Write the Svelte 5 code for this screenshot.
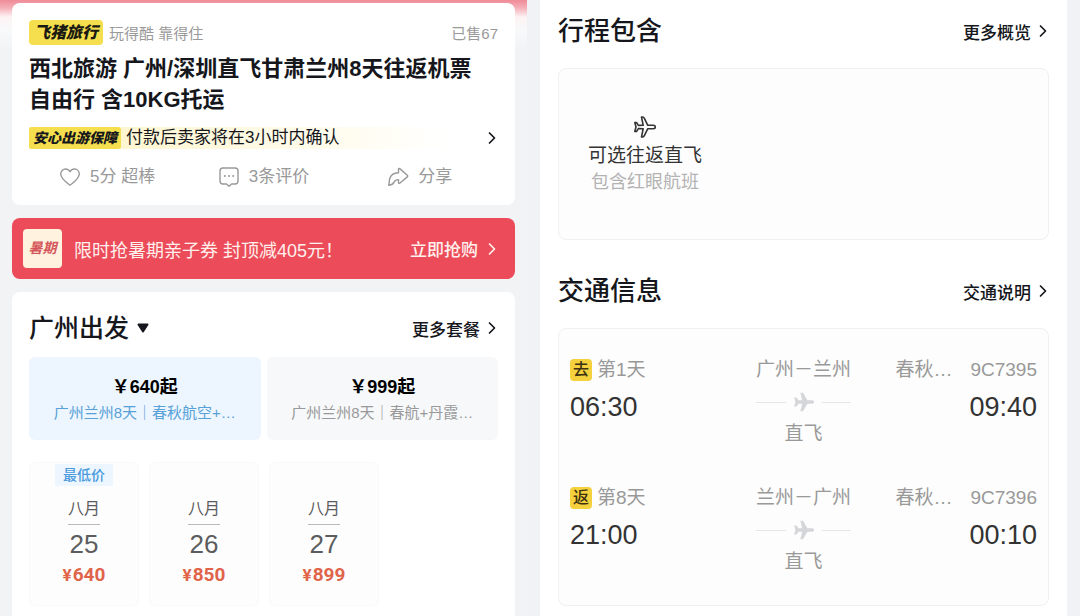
<script>
	let selectedPackage = $state(0);
	let liked = $state(false);

	const packages = [
		{ price: 640, name: '广州兰州8天｜春秋航空+…' },
		{ price: 999, name: '广州兰州8天｜春航+丹霞…' },
	];

	const dates = [
		{ month: '八月', day: 25, price: 640, lowest: true },
		{ month: '八月', day: 26, price: 850 },
		{ month: '八月', day: 27, price: 899 },
	];

	const flights = [
		{ tag: '去', day: '第1天', depart: '06:30', route: '广州－兰州', airline: '春秋…', code: '9C7395', arrive: '09:40' },
		{ tag: '返', day: '第8天', depart: '21:00', route: '兰州－广州', airline: '春秋…', code: '9C7396', arrive: '00:10' },
	];
</script>

{#snippet chevron()}
	<svg class="chevron" viewBox="0 0 8 14" aria-hidden="true"><path d="M1.500 2 6.500 7l-5 5" /></svg>
{/snippet}

<div class="page">
	<main class="product">
		<section class="card summary">
			<div class="brand-row">
				<span class="brand">飞猪旅行</span>
				<span class="slogan">玩得酷 靠得住</span>
				<span class="sold">已售67</span>
			</div>
			<h1>西北旅游 广州/深圳直飞甘肃兰州8天往返机票自由行 含10KG托运</h1>
			<a href="#guarantee" class="guarantee">
				<span class="guarantee-tag">安心出游保障</span>
				<span class="guarantee-text">付款后卖家将在3小时内确认</span>
				{@render chevron()}
			</a>
			<div class="actions">
				<button class:liked onclick={() => (liked = !liked)}>
					<svg viewBox="0 0 22 22" aria-hidden="true">
						<path d="M11 19.200C8 17 1.700 12.800 1.700 8.100 1.700 5 3.900 3 6.500 3 8.400 3 10 4 11 5.700 12 4 13.600 3 15.500 3c2.600 0 4.800 2 4.800 5.100 0 4.700-6.300 8.900-9.300 11.100z" />
					</svg>
					5分 超棒
				</button>
				<button>
					<svg viewBox="0 0 22 22" aria-hidden="true">
						<path d="M5 2h12a3 3 0 0 1 3 3v10a3 3 0 0 1-3 3h-3.500L11 20.200 8.500 18H5a3 3 0 0 1-3-3V5a3 3 0 0 1 3-3z" />
						<path class="dots" d="M6.800 10h.01M11 10h.01M15.200 10h.01" />
					</svg>
					3条评价
				</button>
				<button>
					<svg viewBox="0 0 22 22" aria-hidden="true">
						<path d="M11.500 3.200c0-.7.700-1 1.200-.6l7.600 6.700c.5.500.5 1.100 0 1.600l-7.600 6.300c-.5.400-1.200.1-1.200-.6v-3c-2.500 0-3.700.8-4.600 2.800-.7 1.500-1.700 2.400-4.700 2.800-.6.1-.8-.4-.5-.8 1-1.500.3-3 .9-5.400C3.600 9.400 6.700 7 11.500 6.800z" />
					</svg>
					分享
				</button>
			</div>
		</section>

		<a href="#coupon" class="coupon">
			<span class="coupon-icon">暑期</span>
			<span class="coupon-text">限时抢暑期亲子券 封顶减405元！</span>
			<span class="coupon-go">立即抢购</span>
			{@render chevron()}
		</a>

		<section class="card booking">
			<header>
				<button class="departure">
					广州出发
					<svg viewBox="0 0 12 10" aria-hidden="true"><path d="M1.500 1.500h9L6 8.500z" /></svg>
				</button>
				<a href="#packages" class="more">更多套餐 {@render chevron()}</a>
			</header>
			<div class="packages">
				{#each packages as item, i}
					<button class="package" class:active={selectedPackage === i} onclick={() => (selectedPackage = i)}>
						<strong>￥{item.price}起</strong>
						<span>{item.name}</span>
					</button>
				{/each}
			</div>
			<div class="dates">
				{#each dates as date}
					<button class="date">
						{#if date.lowest}
							<span class="lowest">最低价</span>
						{/if}
						<span class="month">{date.month}</span>
						<span class="day">{date.day}</span>
						<span class="price"><span class="yen">¥</span>{date.price}</span>
					</button>
				{/each}
			</div>
		</section>
	</main>

	<aside class="details">
		<section>
			<header>
				<h2>行程包含</h2>
				<a href="#overview" class="more">更多概览 {@render chevron()}</a>
			</header>
			<div class="panel included">
				<div class="feature">
					<svg viewBox="0 0 24 24" aria-hidden="true">
						<path d="M22.300 12c0-1-.9-1.700-2.100-1.700h-5.400L11.500 3.600C11 2.600 10.500 2 9.700 2H8.500l1.700 8.300-4.800.1L3.500 7.500H1.800L3 12l-1.200 4.500h1.700l1.900-2.900 4.800.1L8.500 22h1.200c.8 0 1.300-.6 1.800-1.600l3.300-6.700h5.400c1.200 0 2.100-.7 2.100-1.700z" />
					</svg>
					<span class="feature-name">可选往返直飞</span>
					<span class="feature-note">包含红眼航班</span>
				</div>
			</div>
		</section>

		<section>
			<header>
				<h2>交通信息</h2>
				<a href="#transport" class="more">交通说明 {@render chevron()}</a>
			</header>
			<div class="panel flights">
				{#each flights as flight}
					<article class="flight">
						<div>
							<div class="label"><span class="tag">{flight.tag}</span>{flight.day}</div>
							<time>{flight.depart}</time>
						</div>
						<div class="route">
							<div class="label">{flight.route}</div>
							<div class="track">
								<svg viewBox="0 0 24 24" aria-hidden="true">
									<path d="M23 12c0-1.200-1-2-2.300-2h-5L10.900 1.800H8l2 8.200H6L3.800 7H1.300l1.400 5-1.400 5h2.500L6 14h4l-2 8.200h2.900l4.800-8.200h5c1.300 0 2.300-.8 2.300-2z" />
								</svg>
							</div>
							<div class="label">直飞</div>
						</div>
						<div class="arrival">
							<div class="label"><span>{flight.airline}</span><span>{flight.code}</span></div>
							<time>{flight.arrive}</time>
						</div>
					</article>
				{/each}
			</div>
		</section>
	</aside>
</div>

<style>
	:global(body) {
		margin: 0;
		background: #f0f2f5;
	}

	.page {
		display: grid;
		grid-template-columns: 1fr 1fr;
		min-height: 100vh;
		font-family: 'Liberation Sans', 'Noto Sans CJK SC', sans-serif;
		color: #15171c;
	}

	.page :global(*) {
		box-sizing: border-box;
	}

	button {
		padding: 0;
		border: 0;
		background: none;
		font: inherit;
		color: inherit;
		cursor: pointer;
	}

	a {
		color: inherit;
		text-decoration: none;
	}

	h1,
	h2 {
		margin: 0;
		font-weight: 500;
	}

	svg {
		flex-shrink: 0;
		fill: none;
		stroke: currentColor;
		stroke-linecap: round;
		stroke-linejoin: round;
	}

	header {
		display: flex;
		align-items: center;
		justify-content: space-between;
	}

	.chevron {
		width: 8px;
		height: 14px;
		stroke-width: 1.7;
	}

	.product {
		display: flex;
		flex-direction: column;
		gap: 13px;
		min-width: 0;
		margin-right: 13px;
		padding: 3px 12px 0;
		background: linear-gradient(#ef8b98, #f5b0b8 8px, #fdf3f4 17px, #f8f9fa 30px, #f2f3f5 50px);
	}

	.card {
		padding: 17px 17px 16px;
		border-radius: 8px;
		background: #fff;
	}

	.brand-row {
		display: flex;
		align-items: center;
		gap: 6px;
		height: 25px;
		font-size: 15px;
		color: #999;
	}

	.brand {
		padding: 0 5px;
		border-radius: 4px;
		background: #f5df4e;
		font-size: 16px;
		font-style: italic;
		font-weight: 900;
		line-height: 25px;
		color: #1b1a12;
	}

	.sold {
		margin-left: auto;
	}

	h1 {
		margin-top: 8px;
		padding-right: 12px;
		font-size: 22px;
		font-weight: 700;
		line-height: 31px;
	}

	.guarantee {
		display: flex;
		align-items: center;
		gap: 5px;
		height: 22px;
		margin-top: 12px;
		padding-right: 2px;
		background: linear-gradient(90deg, #fdf3c4, #fffbe8 55%, #fff 90%);
		font-size: 17px;
		line-height: 22px;
	}

	.guarantee-tag {
		padding: 0 4px;
		border-radius: 3px;
		background: #f5df4e;
		font-size: 14px;
		font-style: italic;
		font-weight: 900;
	}

	.guarantee .chevron {
		margin-left: auto;
	}

	.actions {
		display: grid;
		grid-template-columns: repeat(3, 1fr);
		margin-top: 16px;
		font-size: 17px;
		line-height: 24px;
		color: #999;
	}

	.actions button {
		display: flex;
		align-items: center;
		justify-content: center;
		gap: 9px;
	}

	.actions svg {
		width: 22px;
		height: 22px;
		stroke-width: 1.4;
	}

	.actions .dots {
		stroke-width: 2;
	}

	.actions .liked {
		color: #ec4c59;
	}

	.coupon {
		display: flex;
		align-items: center;
		height: 61px;
		padding: 0 19px 0 11px;
		border-radius: 8px;
		background: #ec4c59;
		font-size: 18px;
		color: #fff0ee;
	}

	.coupon-icon {
		width: 39px;
		margin-right: 12px;
		border-radius: 4px;
		background: #fff2df;
		font-size: 14px;
		font-style: italic;
		font-weight: 700;
		line-height: 39px;
		text-align: center;
		color: #d4575b;
	}

	.coupon-go {
		margin-left: auto;
		margin-right: 10px;
		font-size: 17px;
		font-weight: 500;
	}

	.booking {
		flex: 1;
		padding: 20px 17px 10px;
		border-radius: 8px 8px 0 0;
	}

	.departure {
		display: flex;
		align-items: center;
		gap: 8px;
		font-size: 25px;
		font-weight: 500;
		line-height: 32px;
	}

	.departure svg {
		width: 12px;
		height: 10px;
		fill: currentColor;
		stroke-width: 2;
	}

	.more {
		display: flex;
		align-items: center;
		gap: 8px;
		padding-right: 2px;
		font-size: 17px;
		font-weight: 500;
	}

	.packages {
		display: grid;
		grid-template-columns: 1fr 1fr;
		gap: 6px;
		margin-top: 13px;
	}

	.package {
		display: flex;
		flex-direction: column;
		align-items: center;
		justify-content: center;
		height: 83px;
		padding-top: 2px;
		border-radius: 6px;
		background: #f6f8fa;
		font-size: 15px;
		line-height: 26px;
		color: #999;
	}

	.package strong {
		font-size: 18px;
		color: #000;
	}

	.package.active {
		background: #edf6fe;
		color: #57a0d8;
	}

	.dates {
		display: grid;
		grid-template-columns: repeat(3, 110px);
		gap: 10px;
		margin-top: 22px;
	}

	.date {
		position: relative;
		display: flex;
		flex-direction: column;
		align-items: center;
		height: 144px;
		padding-top: 34px;
		border: 1px solid #f9f9f9;
		border-radius: 6px;
		background: #fdfdfd;
		color: #5c5c5e;
	}

	.lowest {
		position: absolute;
		top: 1px;
		width: 58px;
		background: #edf6fe;
		font-size: 14px;
		font-weight: 500;
		line-height: 22px;
		color: #4a9add;
	}

	.month {
		padding-bottom: 4px;
		border-bottom: 1px solid #bbb;
		font-size: 16px;
		line-height: 23px;
	}

	.day {
		margin-top: 3px;
		font-size: 26px;
		line-height: 32px;
	}

	.price {
		font-family: Roboto, 'Noto Sans CJK SC', sans-serif;
		font-size: 19px;
		font-weight: 700;
		line-height: 30px;
		color: #e0644a;
	}

	.yen {
		margin-right: 1px;
		font-size: 17px;
	}

	.details {
		min-width: 0;
		margin-right: 13px;
		padding: 13px 18px 10px;
		background: #fff;
	}

	.details section + section {
		margin-top: 33px;
	}

	.details h2 {
		font-size: 26px;
		line-height: 36px;
	}

	.panel {
		margin-top: 19px;
		border: 1px solid #f0f0f1;
		border-radius: 8px;
		background: #fdfdfd;
	}

	.included {
		padding: 46px 29px 43px;
	}

	.feature {
		display: inline-flex;
		flex-direction: column;
		align-items: center;
		vertical-align: top;
		line-height: 27px;
	}

	.feature svg {
		width: 24px;
		height: 24px;
		margin-bottom: 3px;
		stroke-width: 1.6;
		color: #333;
	}

	.feature-name {
		font-size: 19px;
		color: #333;
	}

	.feature-note {
		font-size: 18px;
		color: #b3b3b3;
	}

	.flights {
		display: grid;
		gap: 38px;
		padding: 28px 11px 30px;
	}

	.flight {
		display: grid;
		grid-template-columns: 1fr auto 1fr;
	}

	.label {
		display: flex;
		align-items: center;
		font-size: 19px;
		line-height: 26px;
		color: #999;
	}

	.tag {
		width: 22px;
		margin-right: 5px;
		border-radius: 4px;
		background: #f4d13d;
		font-size: 16px;
		font-weight: 500;
		line-height: 22px;
		text-align: center;
		color: #3d3210;
	}

	time {
		display: block;
		margin-top: 6px;
		font-size: 27px;
		line-height: 36px;
		color: #333;
	}

	.route {
		display: flex;
		flex-direction: column;
		align-items: center;
	}

	.track {
		display: flex;
		align-items: center;
		gap: 7px;
		width: 100%;
		height: 38px;
	}

	.track::before,
	.track::after {
		flex: 1;
		height: 1px;
		background: #e6e6e8;
		content: '';
	}

	.track svg {
		width: 22px;
		height: 22px;
		fill: #d5d6d9;
		stroke: none;
	}

	.arrival {
		text-align: right;
	}

	.arrival .label {
		justify-content: flex-end;
		gap: 18px;
	}
</style>
